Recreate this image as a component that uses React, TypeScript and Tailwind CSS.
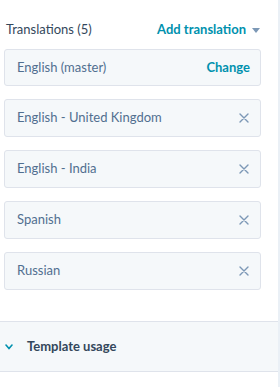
const translations = ['English - United Kingdom', 'English - India', 'Spanish', 'Russian']

function CloseIcon() {
  return (
    <svg width="10" height="10" viewBox="0 0 10 10" className="text-[#7c98b6]">
      <path d="M1 1L9 9M9 1L1 9" stroke="currentColor" strokeWidth="1.4" strokeLinecap="round" />
    </svg>
  )
}

export default function App() {
  return (
    <div className="flex w-[280px] h-[387px] bg-white font-['Lato',sans-serif] overflow-hidden">
      <div className="flex-1 flex flex-col">
        {/* Translations */}
        <div className="pt-[21px] pl-[4px] pr-[17px]">
          <div className="flex items-center justify-between h-[18px] pl-[2px] pr-[1px]">
            <span className="text-[13px] text-[#33475b]">Translations (5)</span>
            <button className="flex items-center gap-[6px] text-[13px] font-bold text-[#0091ae]">
              Add translation
              <svg width="8" height="5" viewBox="0 0 8 5" className="text-[#7c98b6]">
                <path d="M0 0H8L4 5Z" fill="currentColor" />
              </svg>
            </button>
          </div>

          <div className="mt-[10px] flex flex-col gap-[13px]">
            <div className="flex items-center justify-between h-[37px] pl-[12px] pr-[10px] rounded-[3px] border border-[#dfe3eb] bg-[#f5f8fa]">
              <span className="text-[13px] text-[#516f90]">English (master)</span>
              <button className="text-[13px] font-bold text-[#0091ae]">Change</button>
            </div>
            {translations.map((t) => (
              <div
                key={t}
                className="flex items-center justify-between h-[38px] pl-[12px] pr-[11px] rounded-[3px] border border-[#dfe3eb] bg-[#f5f8fa]"
              >
                <span className="text-[13px] text-[#516f90]">{t}</span>
                <CloseIcon />
              </div>
            ))}
          </div>
        </div>

        {/* Template usage */}
        <div className="mt-[31px] flex items-center h-[51px] border-y border-[#dfe3eb] bg-[#f5f8fa] pl-[5px]">
          <svg width="8" height="6" viewBox="0 0 8 6" className="text-[#0091ae]">
            <path d="M1 1L4 4.5L7 1" stroke="currentColor" strokeWidth="1.6" fill="none" strokeLinecap="round" />
          </svg>
          <span className="ml-[14px] text-[13px] font-bold text-[#33475b]">Template usage</span>
        </div>
      </div>
      <div className="w-[2px] bg-[#eaf0f6]" />
    </div>
  )
}
